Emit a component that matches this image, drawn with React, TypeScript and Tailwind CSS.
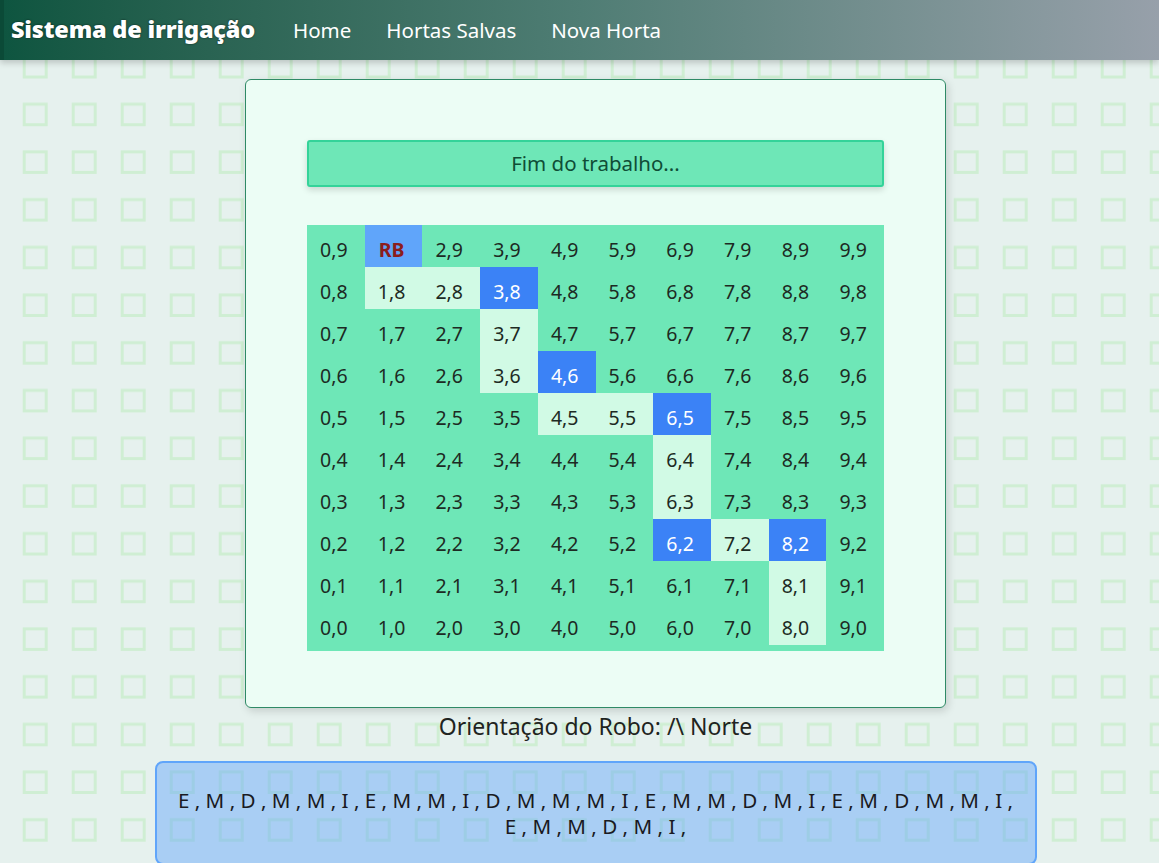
import React from 'react'

const LIGHT = new Set(['1,8', '2,8', '3,7', '3,6', '4,5', '5,5', '6,4', '6,3', '7,2', '8,1', '8,0'])
const BLUE = new Set(['3,8', '4,6', '6,5', '6,2', '8,2'])

const LINE_1 =
  'E , M , D , M , M , I , E , M , M , I , D , M , M , M , I , E , M , M , D , M , I , E , M , D , M , M , I ,'
const LINE_2 = 'E , M , M , D , M , I ,'

function Cell({ x, y }: { x: number; y: number }) {
  const key = `${x},${y}`
  if (x === 1 && y === 9) {
    return (
      <div className="h-[42px] flex items-center justify-center pt-[8px] pr-1 bg-[#60a5fa] text-[#8b1d1d] font-bold">
        RB
      </div>
    )
  }
  let cls = 'text-[#1d2a23]'
  if (LIGHT.has(key)) cls = 'bg-[#d1fae5] text-[#1d2a23]'
  if (BLUE.has(key)) cls = 'bg-[#3b82f6] text-white'
  return <div className={`h-[42px] flex items-center justify-center pt-[8px] pr-1 ${cls}`}>{key}</div>
}

export default function App() {
  const rows = [9, 8, 7, 6, 5, 4, 3, 2, 1, 0]
  const cols = [0, 1, 2, 3, 4, 5, 6, 7, 8, 9]

  return (
    <div
      className="relative min-h-screen overflow-hidden bg-[#e6f1ee]"
      style={{ fontFamily: '"Noto Sans", "Open Sans", sans-serif' }}
    >
      {/* background squares */}
      <svg className="absolute inset-0 w-full h-full" aria-hidden>
        <defs>
          <pattern id="sq" width="49" height="47.7" patternUnits="userSpaceOnUse" x="0" y="0">
            <rect x="24.2" y="8.8" width="22" height="20.5" fill="none" stroke="#cfeed3" strokeWidth="3" />
          </pattern>
        </defs>
        <rect width="100%" height="100%" fill="url(#sq)" />
      </svg>

      {/* Navbar */}
      <nav className="relative z-10 h-[60px] flex items-center bg-gradient-to-r from-[#0e5540] via-[#4f7d74] to-[#97a0aa] shadow-[0_3px_6px_rgba(0,0,0,0.18)] border-l-4 border-[#0b4a37]">
        <span className="ml-[7px] text-white text-[23.5px] font-black tracking-[-0.2px] [text-shadow:0_0_2px_rgba(0,0,0,0.7)]">
          Sistema de irrigação
        </span>
        <div className="flex items-center gap-[35px] ml-[38px] text-white text-[20.5px]">
          <span>Home</span>
          <span>Hortas Salvas</span>
          <span>Nova Horta</span>
        </div>
      </nav>

      <main className="relative flex flex-col items-center pl-[32px]">
        {/* Card */}
        <div className="mt-[19px] w-[701px] bg-[#ecfdf5] border border-[#2f8a66] rounded-md shadow-[2px_3px_8px_rgba(0,0,0,0.15)] px-[61px] pt-[60px] pb-[56px]">
          <button className="w-full h-[47px] bg-[#6ee7b7] border-2 border-[#34d399] rounded-[3px] text-[#0f4d36] text-[20.5px] shadow-[0_3px_6px_rgba(0,0,0,0.15)]">
            Fim do trabalho...
          </button>

          <div className="mt-[38px] bg-[#6ee7b7] pb-[6px] text-[19.5px]">
            <div className="grid grid-cols-10">
              {rows.map(y => cols.map(x => <Cell key={`${x}-${y}`} x={x} y={y} />))}
            </div>
          </div>
        </div>

        <p className="mt-[1px] text-[23px] text-[#1f2421]">Orientação do Robo: /\ Norte</p>

        {/* Commands */}
        <div className="mt-[17px] w-[882px] bg-[#60a5fa]/45 border-2 border-[#60a5fa] rounded-lg px-3 pt-[24px] pb-[24px] text-center text-[20.6px] leading-[26px] text-[#1a1a22] whitespace-nowrap">
          {LINE_1}
          <br />
          {LINE_2}
        </div>
      </main>
    </div>
  )
}
